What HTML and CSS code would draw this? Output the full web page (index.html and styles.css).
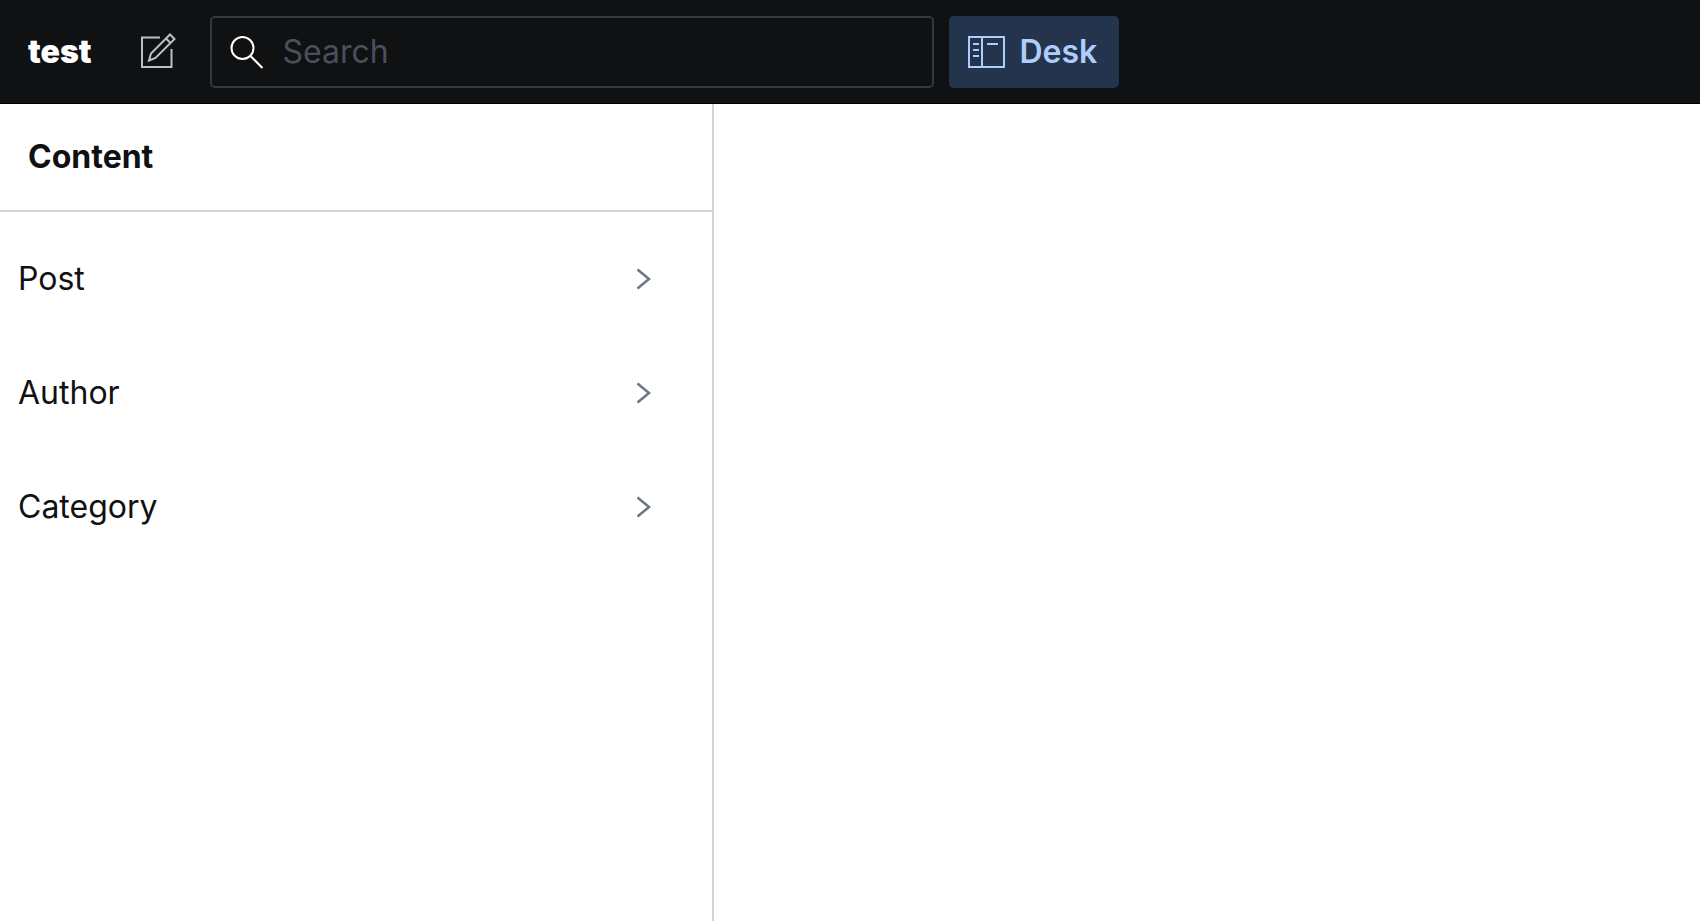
FILE: index.html
```html
<!DOCTYPE html>
<html lang="en">
<head>
    <meta charset="UTF-8">
    <meta name="viewport" content="width=device-width, initial-scale=1.0">
    <title>test - Desk</title>
    <link rel="stylesheet" href="styles.css">
</head>
<body>

<header class="navbar">
    <a class="brand" href="#">test</a>
    <button class="compose-btn" type="button" aria-label="Create new document">
        <svg width="40" height="40" viewBox="0 0 40 40" fill="none" stroke="currentColor" stroke-width="2">
            <path d="M22 5.5H4V35H33.5V17"/>
            <path d="M11 28.5L13 21.5L32 2.5L36.5 7L17.5 26Z"/>
            <path d="M28 6.5L32.5 11"/>
        </svg>
    </button>
    <label class="search">
        <svg width="40" height="40" viewBox="0 0 40 40" fill="none" stroke="currentColor" stroke-width="2">
            <circle cx="16.5" cy="16" r="11"/>
            <path d="M24.5 24L36.5 36"/>
        </svg>
        <input type="text" placeholder="Search" aria-label="Search">
    </label>
    <a class="tool" href="#">
        <svg width="40" height="40" viewBox="0 0 40 40" fill="none" stroke="currentColor" stroke-width="2">
            <path d="M2 5H37V35H2Z"/>
            <path d="M15 5V35"/>
            <path d="M6 12H12M6 18H12M6 24H12M20 12H31"/>
        </svg>
        <span>Desk</span>
    </a>
</header>

<div class="desk">
    <section class="pane">
        <h2 class="pane-title">Content</h2>
        <nav class="pane-list">
            <a class="pane-item" href="#">
                <span>Post</span>
                <svg width="40" height="40" viewBox="0 0 40 40" fill="none" stroke="currentColor" stroke-width="2.5">
                    <path d="M13.5 10.5L25 20L13.5 29.5"/>
                </svg>
            </a>
            <a class="pane-item" href="#">
                <span>Author</span>
                <svg width="40" height="40" viewBox="0 0 40 40" fill="none" stroke="currentColor" stroke-width="2.5">
                    <path d="M13.5 10.5L25 20L13.5 29.5"/>
                </svg>
            </a>
            <a class="pane-item" href="#">
                <span>Category</span>
                <svg width="40" height="40" viewBox="0 0 40 40" fill="none" stroke="currentColor" stroke-width="2.5">
                    <path d="M13.5 10.5L25 20L13.5 29.5"/>
                </svg>
            </a>
        </nav>
    </section>
    <main class="content"></main>
</div>

</body>
</html>
```

FILE: styles.css
```css
* {
    box-sizing: border-box;
    margin: 0;
    padding: 0;
}

body {
    display: flex;
    flex-direction: column;
    min-height: 100vh;
    background: #fff;
    color: #101112;
    font-family: Inter, sans-serif;
    font-size: 32px;
    line-height: 40px;
}

a {
    color: inherit;
    text-decoration: none;
}

svg {
    display: block;
    flex: none;
}

.navbar {
    display: flex;
    align-items: center;
    padding: 16px 28px 15px;
    background: #101112;
    border-bottom: 1px solid #000;
}

.brand {
    color: #fff;
    font-weight: 900;
}

.compose-btn {
    padding: 16px;
    margin: 0 16px 0 31px;
    background: none;
    border: none;
    color: #bac0ca;
    cursor: pointer;
}

.search {
    display: flex;
    align-items: center;
    flex: 0 1 724px;
    gap: 16px;
    height: 72px;
    padding: 0 14px;
    margin-right: 15px;
    border: 2px solid #35393f;
    border-radius: 5px;
    color: #fff;
}

.search input {
    flex: 1;
    min-width: 0;
    background: none;
    border: none;
    outline: none;
    color: #fff;
    font: inherit;
}

.search input::placeholder {
    color: #4a505b;
    opacity: 1;
}

.tool {
    display: flex;
    align-items: center;
    gap: 12px;
    height: 72px;
    padding: 0 22px 0 18px;
    background: #23344c;
    border-radius: 5px;
    color: #afcdfb;
    font-weight: 600;
}

.desk {
    display: flex;
    flex: 1;
}

.pane {
    flex: 0 0 42%;
    border-right: 2px solid #cfd3da;
}

.pane-title {
    padding: 33px 28px;
    border-bottom: 2px solid #cfd3da;
    font-size: 32px;
    font-weight: 700;
}

.pane-list {
    display: flex;
    flex-direction: column;
    gap: 8px;
    padding: 14px 0;
}

.pane-item {
    display: flex;
    align-items: center;
    justify-content: space-between;
    padding: 33px 48px 33px 18px;
}

.pane-item svg {
    color: #6e7683;
}

.content {
    flex: 1;
}
```
